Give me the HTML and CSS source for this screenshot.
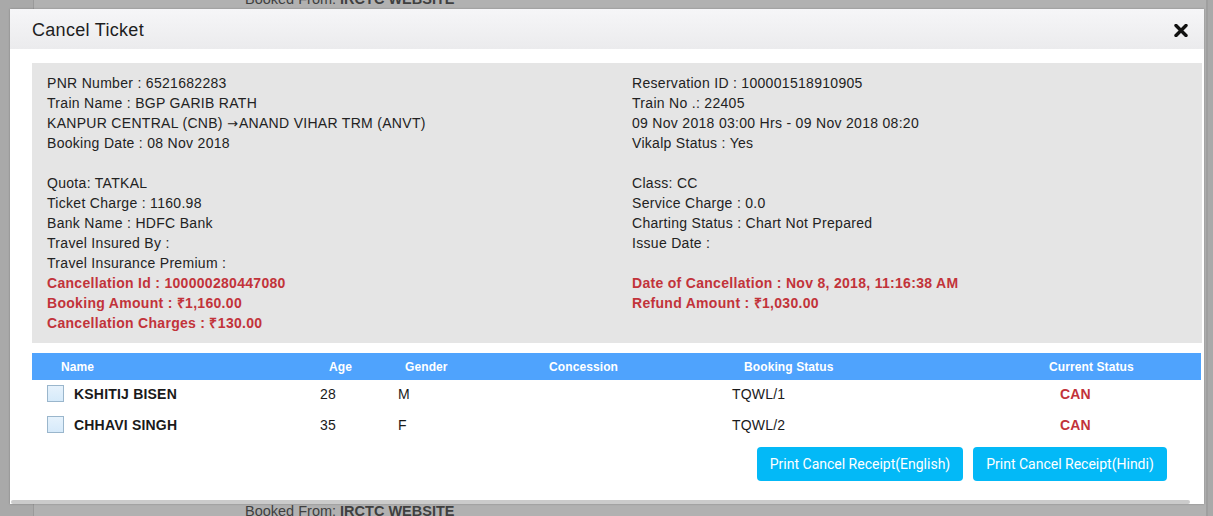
FILE: index.html
```html
<!DOCTYPE html>
<html lang="en">
<head>
<meta charset="utf-8">
<title>Cancel Ticket</title>
<link rel="stylesheet" href="styles.css">
</head>
<body>
<div class="page">
  <div class="booked booked-top">Booked From: <b>IRCTC WEBSITE</b></div>
  <div class="page-bottom">
    <span class="green-line"></span>
    <div class="booked booked-bottom">Booked From: <b>IRCTC WEBSITE</b></div>
  </div>
</div>
<div class="side-line"></div>

<div class="modal">
  <div class="modal-header">
    <h4 class="modal-title">Cancel Ticket</h4>
    <button class="close" aria-label="Close">
      <svg width="14" height="13" viewBox="0 0 14 13"><path d="M2 1.5 L12 11.5 M12 1.5 L2 11.5" stroke="#111" stroke-width="3.4" stroke-linecap="round"/></svg>
    </button>
  </div>
  <div class="modal-body">
    <div class="info">
      <div class="col">
        <div>PNR Number : 6521682283</div>
        <div>Train Name : BGP GARIB RATH</div>
        <div>KANPUR CENTRAL (CNB) <span class="arrow">→</span>ANAND VIHAR TRM (ANVT)</div>
        <div>Booking Date : 08 Nov 2018</div>
        <div class="blank"></div>
        <div>Quota: TATKAL</div>
        <div>Ticket Charge : 1160.98</div>
        <div>Bank Name : HDFC Bank</div>
        <div>Travel Insured By :</div>
        <div>Travel Insurance Premium :</div>
        <div class="red">Cancellation Id : 100000280447080</div>
        <div class="red">Booking Amount : ₹1,160.00</div>
        <div class="red">Cancellation Charges : ₹130.00</div>
      </div>
      <div class="col">
        <div>Reservation ID : 100001518910905</div>
        <div>Train No .: 22405</div>
        <div>09 Nov 2018 03:00 Hrs - 09 Nov 2018 08:20</div>
        <div>Vikalp Status : Yes</div>
        <div class="blank"></div>
        <div>Class: CC</div>
        <div>Service Charge : 0.0</div>
        <div>Charting Status : Chart Not Prepared</div>
        <div>Issue Date :</div>
        <div class="blank"></div>
        <div class="red">Date of Cancellation : Nov 8, 2018, 11:16:38 AM</div>
        <div class="red">Refund Amount : ₹1,030.00</div>
      </div>
    </div>

    <div class="ptable">
      <div class="prow phead">
        <div class="c1 h1">Name</div>
        <div class="c2 h2">Age</div>
        <div class="c3 h3">Gender</div>
        <div class="c4 h4">Concession</div>
        <div class="c5 h5">Booking Status</div>
        <div class="c6 h6">Current Status</div>
      </div>
      <div class="prow pdata">
        <div class="c1 d1"><span class="check"></span><b>KSHITIJ BISEN</b></div>
        <div class="c2 d2">28</div>
        <div class="c3 d3">M</div>
        <div class="c4"></div>
        <div class="c5 d5">TQWL/1</div>
        <div class="c6 d6">CAN</div>
      </div>
      <div class="prow pdata">
        <div class="c1 d1"><span class="check"></span><b>CHHAVI SINGH</b></div>
        <div class="c2 d2">35</div>
        <div class="c3 d3">F</div>
        <div class="c4"></div>
        <div class="c5 d5">TQWL/2</div>
        <div class="c6 d6">CAN</div>
      </div>
    </div>

    <div class="actions">
      <button class="btn btn-en">Print Cancel Receipt(English)</button>
      <button class="btn btn-hi">Print Cancel Receipt(Hindi)</button>
    </div>
  </div>
  <div class="hscroll"></div>
</div>
</body>
</html>
```

FILE: styles.css
```css
html, body {
  margin: 0;
  padding: 0;
  height: 516px;
  overflow: hidden;
}
body {
  background: #a9a9a9;
  font-family: "Liberation Sans", Arial, sans-serif;
  color: #222;
  display: flex;
}
.page {
  margin-left: 33px;
  width: 1172px;
  height: 516px;
  border-left: 1px solid #9a9a9a;
  background: #b1b1b1;
  display: flex;
  flex-direction: column;
  justify-content: space-between;
}
.side-line {
  width: 2px;
  height: 516px;
  background: #9f9f9f;
}
.booked {
  font-size: 14.5px;
  line-height: 18px;
  color: #3f3f3f;
  padding-left: 211px;
}
.booked b { font-weight: bold; }
.booked-top { margin-top: -10px; }
.page-bottom {
  position: relative;
  height: 14px;
}
.green-line {
  position: absolute;
  left: 18px;
  top: 0;
  width: 38px;
  height: 2px;
  background: linear-gradient(to right, #2f7d3a 70%, rgba(47,125,58,0));
}

.modal {
  position: absolute;
  left: 10px;
  top: 9px;
  width: 1194px;
  height: 495px;
  background: #fff;
  box-shadow: 0 0 2px rgba(0,0,0,0.25);
  display: flex;
  flex-direction: column;
}
.modal-header {
  height: 40px;
  background: linear-gradient(#f6f6f8, #ebebed);
  display: flex;
  align-items: center;
  justify-content: space-between;
  padding: 0 16px 0 22px;
}
.modal-title {
  margin: 3px 0 0;
  font-size: 18px;
  font-weight: normal;
  color: #1e1e1e;
  letter-spacing: 0.3px;
}
.close {
  border: 0;
  background: none;
  padding: 0;
  width: 14px;
  height: 13px;
  display: block;
  margin-top: 2px;
}
.close svg { display: block; }

.modal-body {
  padding: 14px 2px 0 22px;
  flex: 1;
}
.info {
  background: #e5e5e5;
  height: 280px;
  display: grid;
  grid-template-columns: 585px 585px;
  font-size: 14px;
  line-height: 20px;
  color: #222;
  letter-spacing: 0.3px;
}
.col {
  padding: 10px 15px;
}
.col > div {
  height: 20px;
  overflow: visible;
  white-space: nowrap;
}
.arrow {
  font-family: "DejaVu Sans", sans-serif;
  font-size: 13px;
  line-height: 10px;
  letter-spacing: 0;
  margin-right: 1px;
}
.red {
  color: #c2333a;
  font-weight: bold;
}

.ptable {
  margin-top: 10px;
  width: 1169px;
}
.prow {
  display: grid;
  grid-template-columns: 278px 80px 145px 185px 280px 201px;
  align-items: center;
}
.phead {
  height: 27px;
  background: #4fa3fd;
  color: #fff;
  font-weight: bold;
  font-size: 12px;
  letter-spacing: 0.1px;
}
.pdata {
  height: 31px;
  box-sizing: border-box;
  padding-bottom: 4px;
  font-size: 14px;
  color: #1a1a1a;
  letter-spacing: 0.2px;
}
.h1 { padding-left: 29px; }
.h2 { padding-left: 19px; }
.h3 { padding-left: 15px; }
.h4 { padding-left: 14px; }
.h5 { padding-left: 24px; }
.h6 { padding-left: 49px; }
.d1 {
  padding-left: 15px;
  display: flex;
  align-items: center;
}
.d2 { padding-left: 10px; }
.d3 { padding-left: 8px; }
.d5 { padding-left: 12px; }
.d6 {
  padding-left: 60px;
  color: #c2333a;
  font-weight: bold;
}
.check {
  width: 15px;
  height: 15px;
  border: 1px solid #9ab6cc;
  background: linear-gradient(#e6f2fc, #d6eafa);
  margin-right: 10px;
  box-sizing: content-box;
}

.actions {
  margin-top: 5px;
  width: 1135px;
  display: flex;
  justify-content: flex-end;
  gap: 10px;
}
.btn {
  height: 34px;
  border: 0;
  border-radius: 4px;
  background: #03b9f7;
  color: #fff;
  font-family: Roboto, "Liberation Sans", sans-serif;
  font-size: 14px;
  padding: 0;
}
.btn-en { width: 206px; }
.btn-hi { width: 194px; }

.hscroll {
  height: 4px;
  margin: 0 14px 0 1px;
  background: #cbcbcb;
  border-radius: 2px;
}
```
